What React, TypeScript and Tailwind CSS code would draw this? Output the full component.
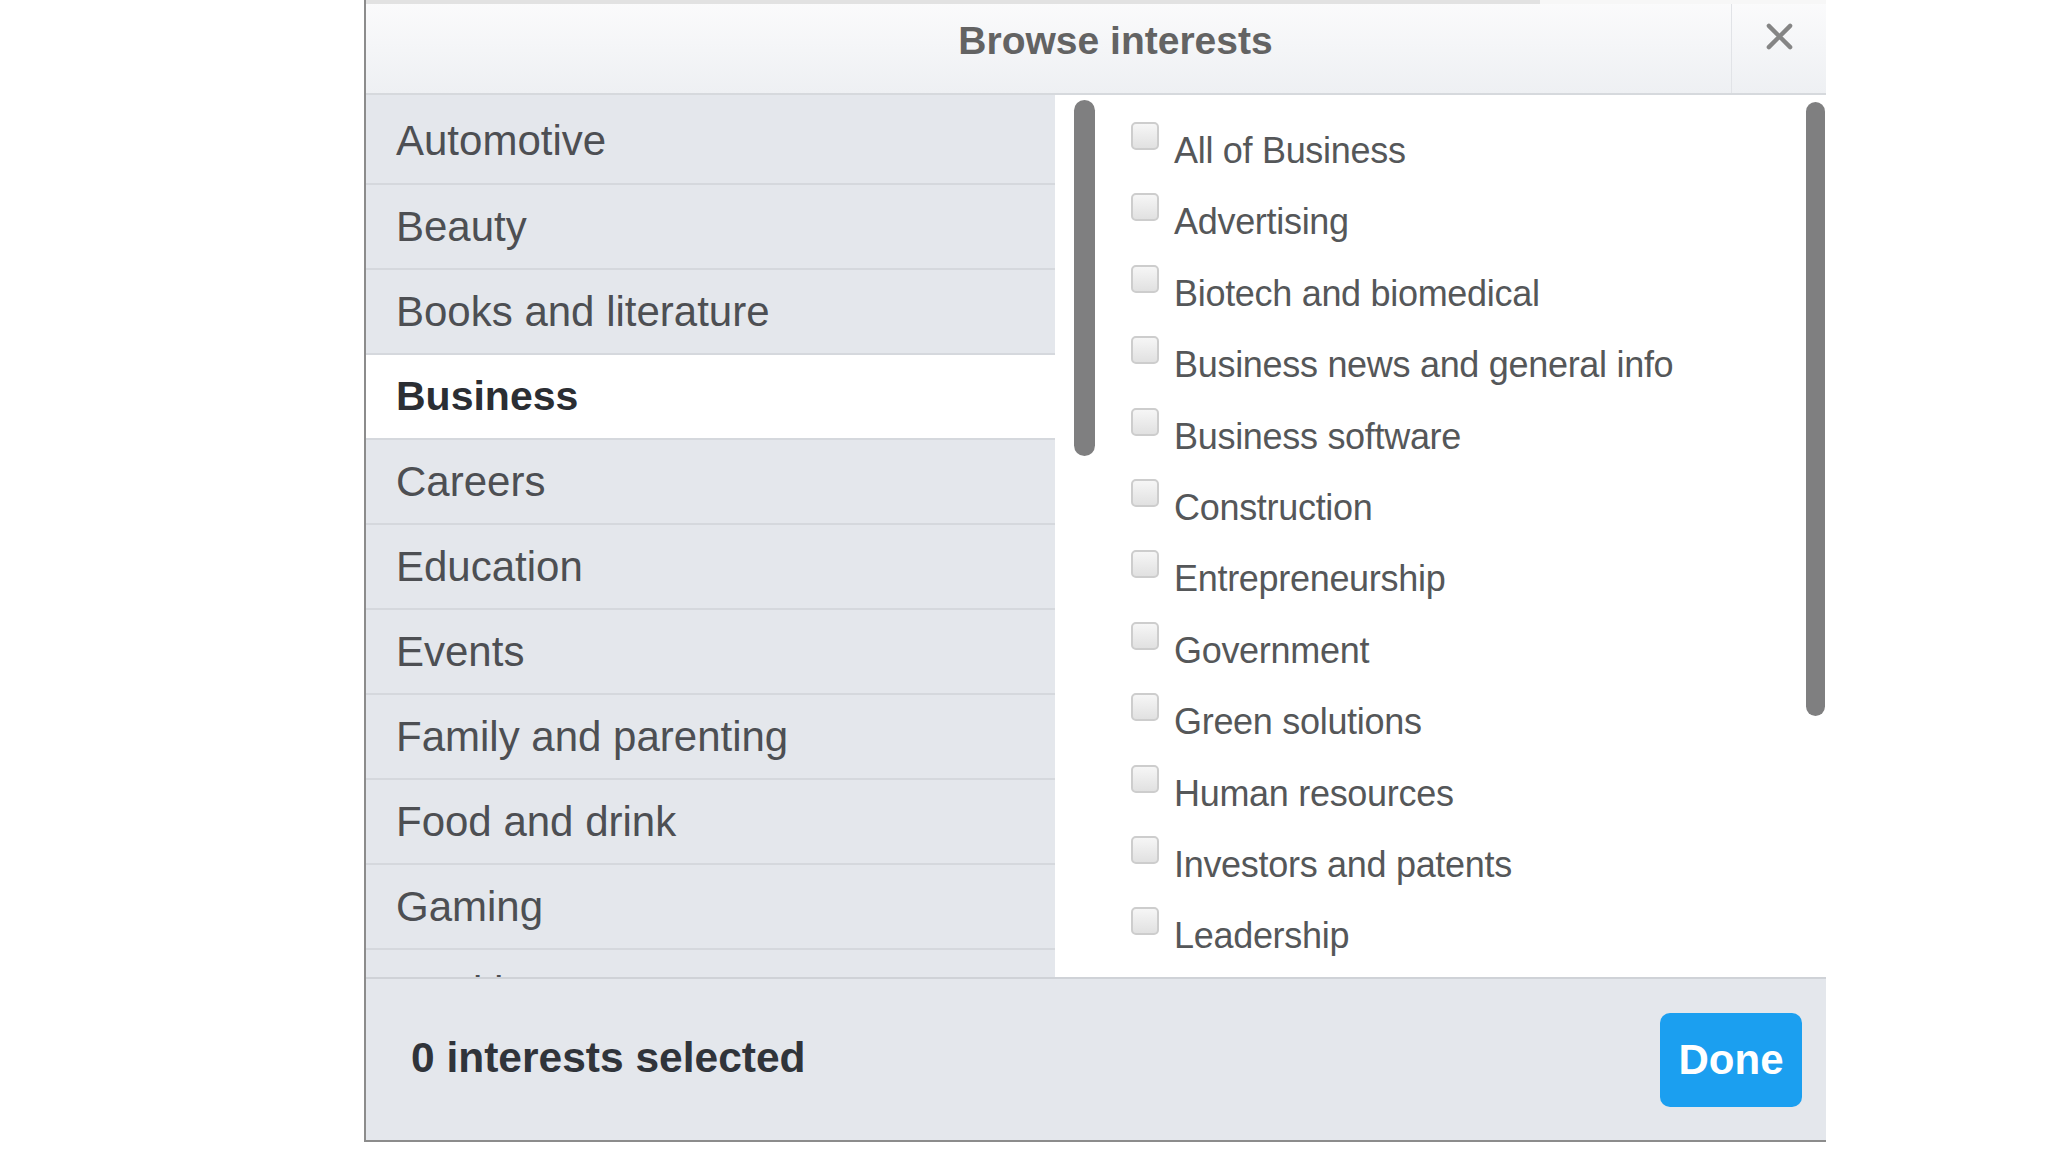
import React from "react";

const categories = [
  "Automotive",
  "Beauty",
  "Books and literature",
  "Business",
  "Careers",
  "Education",
  "Events",
  "Family and parenting",
  "Food and drink",
  "Gaming",
  "Health",
];

const interests = [
  "All of Business",
  "Advertising",
  "Biotech and biomedical",
  "Business news and general info",
  "Business software",
  "Construction",
  "Entrepreneurship",
  "Government",
  "Green solutions",
  "Human resources",
  "Investors and patents",
  "Leadership",
];

export default function App() {
  return (
    <div className="w-full h-[1152px] bg-white font-['Liberation_Sans',Arial,sans-serif]">
      <div className="ml-[364px] w-[1462px] h-[1142px] border-l-2 border-b-2 border-[#8c8c8c] flex flex-col overflow-hidden">
        {/* Header */}
        <div className="h-[95px] flex flex-col border-b-2 border-[#d6d9dd] bg-linear-to-b from-[#fbfbfc] to-[#eef0f3]">
          <div className="h-[4px] flex">
            <div className="w-[1174px] bg-[#e2e2e2]" />
            <div className="flex-1 bg-[#f7f7f7]" />
          </div>
          <div className="flex-1 flex">
            <div className="flex-1 flex items-center justify-center pl-[134px] pb-[15px]">
              <span className="text-[39px] font-bold text-[#636363]">Browse interests</span>
            </div>
            <div className="w-[95px] border-l border-[#e1e3e7] flex items-center justify-center pb-[25px]">
              <svg width="29" height="29" viewBox="0 0 30 30">
                <path d="M4 4 L26 26 M26 4 L4 26" stroke="#858585" strokeWidth="4.5" strokeLinecap="round" />
              </svg>
            </div>
          </div>
        </div>

        {/* Body */}
        <div className="h-[882px] flex">
          {/* Left column */}
          <div className="w-[734px] flex">
            <div className="w-[689px] bg-[#e4e7ec] pt-[3px] overflow-hidden flex flex-col">
              {categories.map((c, i) => {
                const selected = c === "Business";
                return (
                  <div
                    key={c}
                    className={
                      "h-[85px] shrink-0 flex items-center pl-[30px] " +
                      (i === 0 ? "" : "border-t-2 border-[#d5d8dd] ") +
                      (selected ? "bg-white" : "bg-[#e4e7ec]")
                    }
                  >
                    <span
                      className={
                        selected
                          ? "text-[41px] font-bold text-[#2b2e33]"
                          : "text-[42px] text-[#4d4f53]"
                      }
                    >
                      {c}
                    </span>
                  </div>
                );
              })}
            </div>
            <div className="w-[45px] bg-white">
              <div className="ml-[19px] mt-[5px] w-[21px] h-[356px] rounded-full bg-[#7f7f80]" />
            </div>
          </div>

          {/* Right panel */}
          <div className="flex-1 flex bg-white">
            <div className="flex-1 pl-[31px] pt-[27px] overflow-hidden flex flex-col">
              {interests.map((t) => (
                <div key={t} className="h-[71.4px] shrink-0 flex items-start">
                  <div className="w-[28px] h-[28px] shrink-0 rounded-[5px] border-2 border-[#cdcdcd] bg-linear-to-b from-[#f6f6f6] to-[#e1e1e1]" />
                  <span className="ml-[15px] mt-[9px] leading-[40px] text-[36px] tracking-[-0.3px] text-[#555759] whitespace-nowrap">
                    {t}
                  </span>
                </div>
              ))}
            </div>
            <div className="w-[26px]">
              <div className="ml-[6px] mt-[7px] w-[19px] h-[614px] rounded-full bg-[#7f7f80]" />
            </div>
          </div>
        </div>

        {/* Footer */}
        <div className="flex-1 border-t-2 border-[#cfd2d7] bg-[#e4e7ec] flex items-center justify-between pl-[45px] pr-[24px]">
          <span className="text-[42.5px] font-bold text-[#30343a] pb-[3px]">0 interests selected</span>
          <button className="w-[142px] h-[94px] rounded-[10px] bg-[#1b9ff0] text-white text-[42px] font-bold flex items-center justify-center">
            Done
          </button>
        </div>
      </div>
    </div>
  );
}
